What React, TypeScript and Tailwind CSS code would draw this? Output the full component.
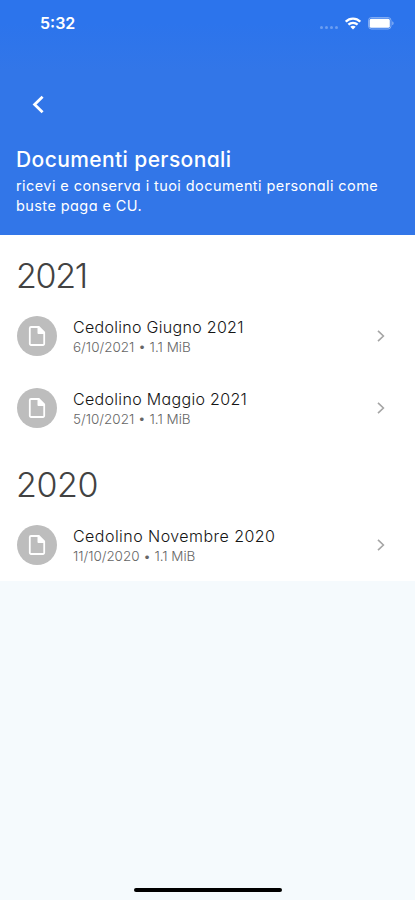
import React from "react";

interface PersonalDocument {
  title: string;
  meta: string;
  titleSpacing: string;
  metaSpacing: string;
}

interface YearGroup {
  year: string;
  spacing: string;
  documents: PersonalDocument[];
}

const groups: YearGroup[] = [
  {
    year: "2021",
    spacing: "tracking-[-1.3px]",
    documents: [
      {
        title: "Cedolino Giugno 2021",
        meta: "6/10/2021 • 1.1 MiB",
        titleSpacing: "tracking-[0.3px]",
        metaSpacing: "tracking-normal",
      },
      {
        title: "Cedolino Maggio 2021",
        meta: "5/10/2021 • 1.1 MiB",
        titleSpacing: "tracking-[0.32px]",
        metaSpacing: "tracking-normal",
      },
    ],
  },
  {
    year: "2020",
    spacing: "tracking-[-0.4px]",
    documents: [
      {
        title: "Cedolino Novembre 2020",
        meta: "11/10/2020 • 1.1 MiB",
        titleSpacing: "tracking-[0.46px]",
        metaSpacing: "tracking-[-0.05px]",
      },
    ],
  },
];

function StatusBar() {
  return (
    <div className="flex h-[46px] items-center justify-between pl-10 pr-[21px]">
      <span className="text-[16px] font-semibold leading-5">5:32</span>
      <div className="flex items-center">
        <div className="mr-[7px] mt-[8px] flex gap-[2px]">
          <span className="size-[3px] rounded-full bg-white/30" />
          <span className="size-[3px] rounded-full bg-white/30" />
          <span className="size-[3px] rounded-full bg-white/30" />
          <span className="size-[3px] rounded-full bg-white/30" />
        </div>
        <svg width="16" height="13" viewBox="0 0 16 13" fill="none" stroke="currentColor" strokeWidth="2.3">
          <path d="M0.8 4.7C4.8 0.6 11.2 0.6 15.2 4.7" />
          <path d="M3.4 7.7C6 5.2 10 5.2 12.6 7.7" />
          <path d="M5.3 9.7C6.9 8.3 9.1 8.3 10.7 9.7L8 12.6Z" fill="currentColor" stroke="none" />
        </svg>
        <svg className="ml-[7px]" width="26" height="13" viewBox="0 0 26 13" fill="none">
          <rect x="0.5" y="0.5" width="22.5" height="11.5" rx="3" stroke="white" strokeOpacity="0.4" />
          <rect x="1.6" y="1.8" width="20.2" height="9" rx="1.6" fill="white" />
          <path d="M24.3 4.3C26 5 26 7.6 24.3 8.3Z" fill="white" fillOpacity="0.5" />
        </svg>
      </div>
    </div>
  );
}

function DocumentRow({ item }: { item: PersonalDocument }) {
  return (
    <li className="flex h-[72px] items-center pl-[17px] pr-[30px]">
      <div className="flex size-10 shrink-0 items-center justify-center rounded-full bg-[#bdbdbd]">
        <svg width="24" height="24" viewBox="0 0 24 24" fill="none" stroke="white" strokeWidth="1.8" strokeLinejoin="round">
          <path d="M13.7 3H6a1.2 1.2 0 0 0-1.2 1.2v15.6A1.2 1.2 0 0 0 6 21h12a1.2 1.2 0 0 0 1.2-1.2V8.5Z" />
          <path d="M13.4 3v6h5.8Z" fill="white" />
        </svg>
      </div>
      <div className="ml-4 flex-1 whitespace-nowrap pt-[2px]">
        <p className={`text-[16px] font-light leading-[21px] text-[#151515] ${item.titleSpacing}`}>{item.title}</p>
        <p className={`text-[13.5px] font-light leading-[19px] text-[#666] ${item.metaSpacing}`}>{item.meta}</p>
      </div>
      <svg width="8" height="12" viewBox="0 0 8 12" fill="none" stroke="#a5a5a5" strokeWidth="1.6">
        <path d="M1 0.8L6.4 6L1 11.2" />
      </svg>
    </li>
  );
}

export default function App() {
  return (
    <div className="flex h-[900px] w-[415px] flex-col overflow-hidden bg-[#f5fafd] font-['Inter',sans-serif] [font-feature-settings:'cv11']">
      <header className="h-[235px] bg-linear-to-b from-[#2c74ec] from-10% to-[#3276e8] to-30% text-white">
        <StatusBar />

        <button aria-label="Indietro" className="ml-8 mt-[49px] block h-[19px] w-3">
          <svg width="12" height="19" viewBox="0 0 12 19" fill="none" stroke="currentColor" strokeWidth="2.8">
            <path d="M10.6 1.8L2.6 9.5L10.6 17.2" />
          </svg>
        </button>

        <div className="mt-[32px] whitespace-nowrap pl-4">
          <h1 className="text-[21px] font-medium leading-[27px] tracking-[0.4px]">Documenti personali</h1>
          <p className="mt-[3px] text-[14.5px] leading-5 tracking-[0.42px]">
            ricevi e conserva i tuoi documenti personali come
            <br />
            buste paga e CU.
          </p>
        </div>
      </header>

      <main className="bg-white">
        {groups.map((group) => (
          <section key={group.year}>
            <h2 className={`h-[65px] pl-4 pt-[16px] text-[34px] font-light leading-[50px] text-[#424242] ${group.spacing}`}>
              {group.year}
            </h2>
            <ul>
              {group.documents.map((item) => (
                <DocumentRow key={item.title} item={item} />
              ))}
            </ul>
          </section>
        ))}
      </main>

      {/* Home indicator */}
      <div className="mx-auto mb-[8px] mt-auto h-1 w-[148px] rounded-full bg-black" />
    </div>
  );
}
